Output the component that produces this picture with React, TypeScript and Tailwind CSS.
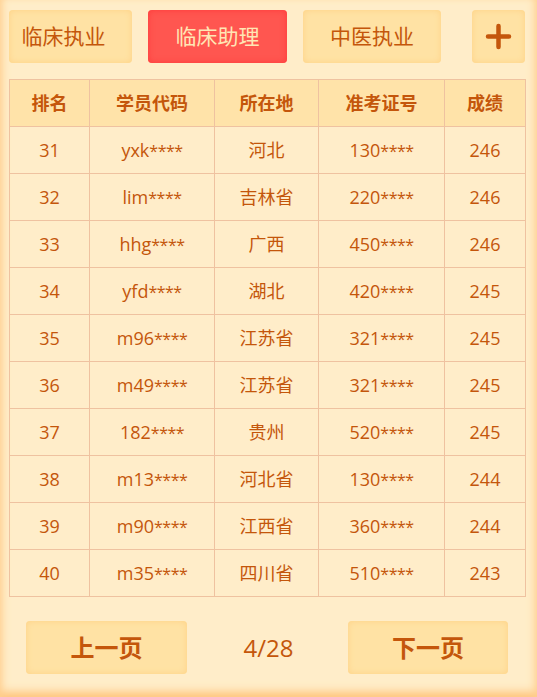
const tabs = [
  { label: '临床执业', w: 'w-[123px] pr-[14px]', active: false },
  { label: '临床助理', w: 'w-[139px]', active: true },
  { label: '中医执业', w: 'w-[138px]', active: false },
]

const rows = [
  ['31', 'yxk****', '河北', '130****', '246'],
  ['32', 'lim****', '吉林省', '220****', '246'],
  ['33', 'hhg****', '广西', '450****', '246'],
  ['34', 'yfd****', '湖北', '420****', '245'],
  ['35', 'm96****', '江苏省', '321****', '245'],
  ['36', 'm49****', '江苏省', '321****', '245'],
  ['37', '182****', '贵州', '520****', '245'],
  ['38', 'm13****', '河北省', '130****', '244'],
  ['39', 'm90****', '江西省', '360****', '244'],
  ['40', 'm35****', '四川省', '510****', '243'],
]

const cols = ['w-[80px]', 'w-[125px]', 'w-[104px]', 'w-[126px]', 'w-[81px]']
const heads = ['排名', '学员代码', '所在地', '准考证号', '成绩']

const font = { fontFamily: '"Open Sans", "Noto Sans CJK SC", sans-serif' }

// masked codes: the stars sit a bit smaller in the original
function Masked({ text }: { text: string }) {
  const i = text.indexOf('*')
  if (i < 0) return <>{text}</>
  return (
    <>
      {text.slice(0, i)}
      <span className="text-[16px] tracking-[-0.5px]">{text.slice(i)}</span>
    </>
  )
}

export default function App() {
  return (
    <div
      style={font}
      className="w-[537px] h-[697px] bg-[#ffedc9] text-[#c4560b] pl-[9px] pr-[12px] pt-[10px] shadow-[inset_7px_0_8px_-5px_#ffcf8f,inset_-7px_0_8px_-5px_#ffcf8f,inset_0_-10px_10px_-5px_#ffc47c]"
    >
      <div className="flex items-center h-[53px]">
        {tabs.map((t, i) => (
          <div
            key={t.label}
            className={
              t.w +
              ' h-full rounded-[4px] flex items-center justify-center text-[21px] ' +
              (i > 0 ? 'ml-[16px] ' : '') +
              (t.active
                ? 'bg-[#ff5650] text-[#ffe6b5] shadow-[inset_0_0_6px_#ff3a3a]'
                : 'bg-[#ffe2a4] text-[#c4560b] shadow-[inset_0_0_6px_#ffd285]')
            }
          >
            {t.label}
          </div>
        ))}
        <div className="ml-auto w-[53px] h-full rounded-[4px] bg-[#ffe2a4] shadow-[inset_0_0_6px_#ffd285] flex items-center justify-center">
          <svg width="27" height="27" viewBox="0 0 27 27">
            <path d="M13.5 3v21M3 13.5h21" stroke="#c4560b" strokeWidth="4.5" strokeLinecap="round" />
          </svg>
        </div>
      </div>

      <table className="mt-[16px] w-[516px] border-collapse table-fixed text-[18px]">
        <colgroup>
          {cols.map((c, i) => (
            <col key={i} className={c} />
          ))}
        </colgroup>
        <thead>
          <tr className="bg-[#ffe3a9]">
            {heads.map(h => (
              <th key={h} className="h-[47px] border border-[#efc2a0] font-bold p-0">
                {h}
              </th>
            ))}
          </tr>
        </thead>
        <tbody>
          {rows.map(r => (
            <tr key={r[0]}>
              {r.map((c, i) => (
                <td key={i} className="h-[47px] border border-[#efc2a0] text-center p-0">
                  <Masked text={c} />
                </td>
              ))}
            </tr>
          ))}
        </tbody>
      </table>

      <div className="mt-[24px] px-[17px] flex items-center justify-between h-[53px]">
        <div className="w-[161px] h-full rounded-[4px] bg-[#ffe2a4] shadow-[inset_0_0_6px_#ffd285] flex items-center justify-center text-[24px] font-bold">
          上一页
        </div>
        <div className="text-[24px] pl-[2px]">4/28</div>
        <div className="w-[160px] h-full rounded-[4px] bg-[#ffe2a4] shadow-[inset_0_0_6px_#ffd285] flex items-center justify-center text-[24px] font-bold">
          下一页
        </div>
      </div>
    </div>
  )
}
